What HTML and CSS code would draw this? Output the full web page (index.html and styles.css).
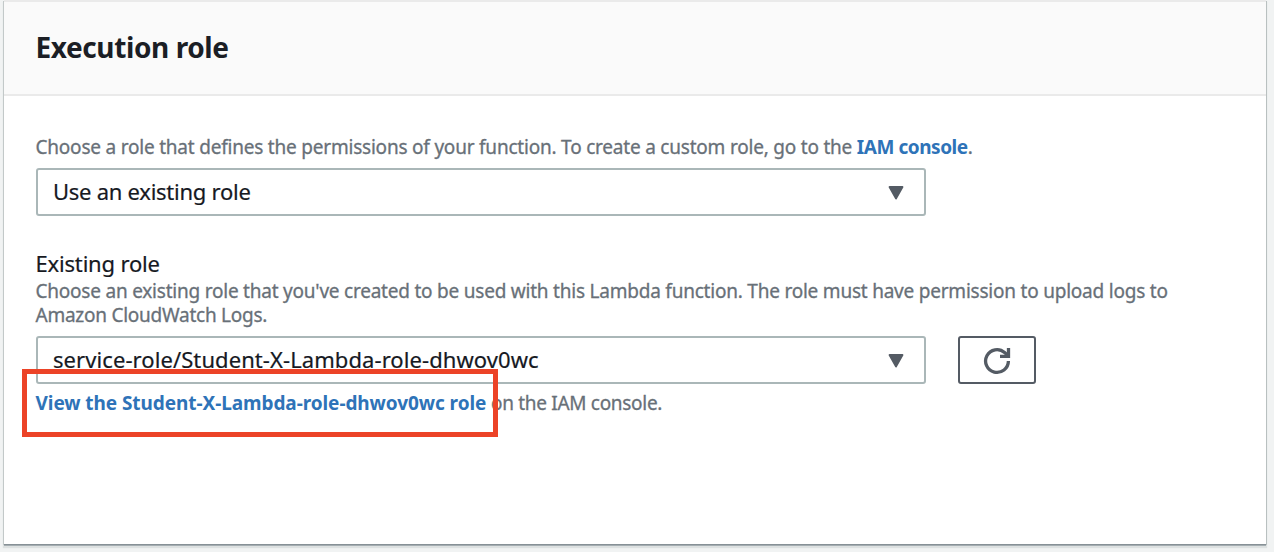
FILE: index.html
```html
<!DOCTYPE html>
<html lang="en">
<head>
<meta charset="utf-8">
<title>Execution role</title>
<link rel="stylesheet" href="styles.css">
</head>
<body>
<section class="panel">
  <header class="panel-header"><h2 class="title">Execution role</h2></header>
  <div class="panel-body">
    <p class="hint"><span class="role-hint">Choose a role that defines the permissions of your function. To create a custom role, go to the </span><a class="link iam-link">IAM console</a>.</p>
    <div class="select"><span class="use-value">Use an existing role</span>
      <svg class="caret" viewBox="0 0 16 14"><path d="M1.500 1h13L8 12.500z"/></svg>
    </div>
    <div class="label">Existing role</div>
    <p class="hint"><span class="existing-hint">Choose an existing role that you've created to be used with this Lambda function. The role must have permission to upload logs to</span><br><span class="logs-hint">Amazon CloudWatch Logs.</span></p>
    <div class="row">
      <div class="select"><span class="role-value">service-role/Student-X-Lambda-role-dhwov0wc</span>
        <svg class="caret" viewBox="0 0 16 14"><path d="M1.500 1h13L8 12.500z"/></svg>
      </div>
      <button class="refresh" aria-label="Refresh">
        <svg class="refresh-icon" viewBox="0 0 28 28"><path d="M25.400 14A11.400 11.400 0 1 1 21.600 5.500L25 8.500"/><path d="M25.500 1v8.300H17"/></svg>
      </button>
    </div>
    <p class="hint view"><a class="link view-link">View the Student-X-Lambda-role-dhwov0wc role</a><span class="view-tail"> on the IAM console.</span></p>
  </div>
  <div class="highlight"></div>
</section>
</body>
</html>
```
FILE: styles.css
```css
* { box-sizing: border-box; }
body {
  margin: 0;
  height: 552px;
  padding: 0 8px 0 4px;
  overflow: hidden;
  background: #f1f3f3;
  font-family: "Noto Sans", "Open Sans", sans-serif;
}
.panel {
  position: relative;
  height: 544px;
  background: #fff;
  border-top: 2px solid #eaeaea;
  box-shadow: 0 1px 0 0 #879196, 0 2px 0 0 #a4adb1, -1px 1px 0 0 #c3c9c9, 1px 1px 0 0 #b9c0c0, 0 3px 1px 1px #dde1e1;
}
.panel-header {
  height: 94px;
  padding: 0 0 2px 31.5px;
  display: flex;
  align-items: center;
  background: #fafafa;
  border-bottom: 2px solid #eaeaea;
}
.title {
  margin: 0;
  font-size: 28px;
  line-height: 36px;
  color: #1b1e25;
  letter-spacing: -0.4px;
}
.panel-body { padding: 39px 32px 0; white-space: nowrap; }
.hint {
  margin: 0 0 0 -0.5px;
  font-size: 19px;
  line-height: 24px;
  color: #687078;
  -webkit-text-stroke: 0.3px;
}
.role-hint { letter-spacing: -0.21px; }
.existing-hint { letter-spacing: -0.22px; }
.logs-hint { letter-spacing: -0.25px; }
.view-tail { letter-spacing: -0.3px; white-space: pre; }
.link { color: #2e73b8; font-weight: 700; -webkit-text-stroke: 0; }
.iam-link { letter-spacing: -0.45px; }
.view-link { letter-spacing: -0.07px; }
.select {
  width: 890px;
  height: 48px;
  padding: 0 20px 0 15px;
  display: flex;
  align-items: center;
  justify-content: space-between;
  border: 2px solid #aab7b8;
  border-radius: 3px;
  font-size: 22px;
  line-height: 30px;
  color: #16191f;
}
.select span { padding-bottom: 2px; -webkit-text-stroke: 0.2px; }
.use-value { letter-spacing: -0.26px; }
.role-value { letter-spacing: 0.08px; }
.hint + .select { margin-top: 9px; }
.caret {
  width: 16px;
  height: 14px;
  margin-top: 2px;
  fill: #545b64;
  stroke: #545b64;
  stroke-width: 1.8;
  stroke-linejoin: round;
}
.label {
  margin: 32px 0 1px -0.5px;
  font-size: 22px;
  line-height: 30px;
  color: #16191f;
  letter-spacing: -0.18px;
  -webkit-text-stroke: 0.2px;
}
.row { display: flex; gap: 32px; margin-top: 9px; }
.refresh {
  width: 78px;
  height: 48px;
  padding: 2px 0 0;
  display: flex;
  align-items: center;
  justify-content: center;
  background: #fff;
  border: 2px solid #545b64;
  border-radius: 3px;
}
.refresh-icon { width: 28px; height: 28px; fill: none; stroke: #545b64; stroke-width: 3.3; }
.view { margin-top: 7px; }
.highlight {
  position: absolute;
  left: 18px;
  top: 367px;
  width: 476px;
  height: 68px;
  border: 5px solid #ec4327;
}
```
